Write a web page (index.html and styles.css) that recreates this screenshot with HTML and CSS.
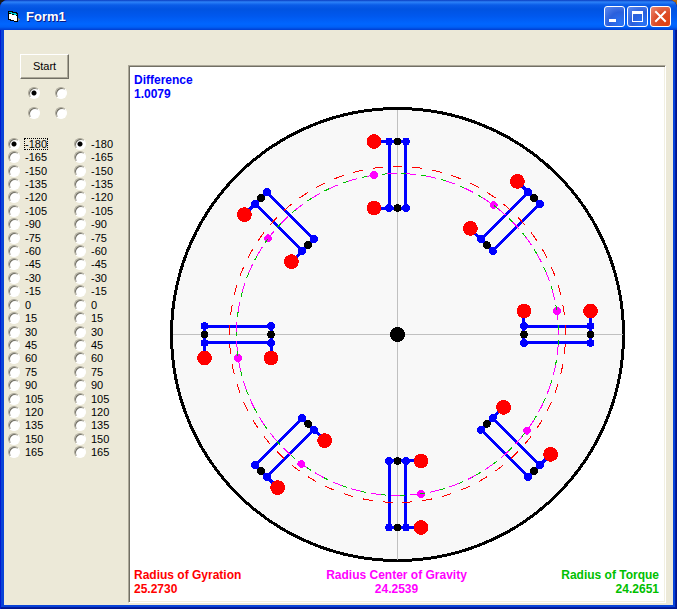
FILE: index.html
```html
<!DOCTYPE html>
<html lang="en">
<head>
  <meta charset="UTF-8" />
  <meta name="viewport" content="width=device-width, initial-scale=1.0" />
  <title>Form1</title>
  <link rel="stylesheet" href="styles.css">
</head>
<body>
  <div class="window">
    <header class="titlebar">
      <svg class="app-icon" width="14" height="12" viewBox="0 0 14 12" shape-rendering="crispEdges">
        <path d="M1 0h5v1h4v1h1v9h-4v-1h-4v-1h-2z" fill="#000" />
        <path d="M2 1h3v1h4v1h1v1h-3v-1h-3v-1h-2z" fill="#00d0d0" />
        <path d="M2 3h3v1h4v1h1v5h-3v-1h-3v-1h-2z" fill="#fff" />
        <path d="M11 7h1v1h1v1h-1v1h-1z" fill="#808080" />
      </svg>
      <h1>Form1</h1>
      <div class="window-buttons">
        <button aria-label="Minimize"><svg width="19" height="19" viewBox="0 0 19 19"><path d="M4 12h7v3h-7z" fill="#fff" /></svg></button>
        <button aria-label="Maximize"><svg width="19" height="19" viewBox="0 0 19 19"><path d="M4 4h11v11h-11z M5 7v7h9v-7z" fill="#fff" fill-rule="evenodd" /></svg></button>
        <button class="close" aria-label="Close"><svg width="19" height="19" viewBox="0 0 19 19"><path d="M5 5l9 9M14 5l-9 9" stroke="#fff" stroke-width="2" stroke-linecap="square" /></svg></button>
      </div>
    </header>

    <main class="client">
      <div class="sidebar">
        <button class="start">Start</button>
        <div class="modes">
          <input type="radio" name="mode" aria-label="Mode 1" checked />
          <input type="radio" name="mode" aria-label="Mode 2" />
          <input type="radio" name="mode" aria-label="Mode 3" />
          <input type="radio" name="mode" aria-label="Mode 4" />
        </div>
        <div class="angles">
          <div class="angle-list" id="angleA"></div>
          <div class="angle-list" id="angleB"></div>
        </div>
      </div>

      <div class="picture">
        <svg class="wheel" viewBox="-267.5 -267.5 534 534" shape-rendering="crispEdges">
          <defs>
            <g id="arm">
              <path d="M-8 -193V-126M8 -193V-126M-24 -193H8M-24 -126H8" stroke="#00f" stroke-width="3" fill="none" />
              <g fill="#00f">
                <circle cx="-8.5" cy="-193" r="3.8" />
                <circle cx="8.5" cy="-193" r="3.8" />
                <circle cx="-8.5" cy="-126.5" r="3.8" />
                <circle cx="8.5" cy="-126.5" r="3.8" />
              </g>
              <circle cx="0" cy="-193" r="3.8" />
              <circle cx="0" cy="-126.5" r="3.8" />
              <circle cx="-23.5" cy="-193" r="7.4" fill="#f00" />
              <circle cx="-23.5" cy="-126.5" r="7.4" fill="#f00" />
            </g>
          </defs>
          <circle r="226" fill="#f8f8f8" stroke="#000" stroke-width="3" />
          <path d="M-225 0H225M0 -225V225" stroke="#c0c0c0" />
          <use href="#arm" />
          <use href="#arm" transform="rotate(45)" />
          <use href="#arm" transform="rotate(90)" />
          <use href="#arm" transform="rotate(135)" />
          <use href="#arm" transform="rotate(180)" />
          <use href="#arm" transform="rotate(225)" />
          <use href="#arm" transform="rotate(270)" />
          <use href="#arm" transform="rotate(315)" />
          <g fill="#f0f">
            <circle cx="-23.5" cy="-159.5" r="3.8" />
            <circle cx="-23.5" cy="-159.5" r="3.8" transform="rotate(45)" />
            <circle cx="-23.5" cy="-159.5" r="3.8" transform="rotate(90)" />
            <circle cx="-23.5" cy="-159.5" r="3.8" transform="rotate(135)" />
            <circle cx="-23.5" cy="-159.5" r="3.8" transform="rotate(180)" />
            <circle cx="-23.5" cy="-159.5" r="3.8" transform="rotate(225)" />
            <circle cx="-23.5" cy="-159.5" r="3.8" transform="rotate(270)" />
            <circle cx="-23.5" cy="-159.5" r="3.8" transform="rotate(315)" />
          </g>
          <!-- gyration, torque and gravity radii, drawn counterclockwise from the right -->
          <g fill="none" stroke-dasharray="10 10">
            <path d="M168 0A168 168 0 0 0 -168 0A168 168 0 0 0 168 0" pathLength="1060" stroke="#f00" />
            <path d="M161 0A161 161 0 0 0 -161 0A161 161 0 0 0 161 0" pathLength="1016" stroke="#00c000" />
            <path d="M161 0A161 161 0 0 0 -161 0A161 161 0 0 0 161 0" pathLength="1016" stroke="#f0f" stroke-dashoffset="5" />
          </g>
          <circle r="7.5" />
        </svg>
        <div class="readouts">
          <p class="difference">Difference<br />1.0079</p>
          <p class="gyration">Radius of Gyration<br />25.2730</p>
          <p class="gravity">Radius Center of Gravity<br />24.2539</p>
          <p class="torque">Radius of Torque<br />24.2651</p>
        </div>
      </div>
    </main>
  </div>

  <script>
    function buildAngles(id) {
      const list = document.getElementById(id);
      for (let angle = -180; angle < 180; angle += 15) {
        const label = document.createElement("label");
        const radio = document.createElement("input");
        const text = document.createElement("span");
        radio.type = "radio";
        radio.name = id;
        radio.value = angle;
        radio.checked = angle === -180;
        text.textContent = angle;
        label.append(radio, text);
        list.append(label);
      }
    }

    buildAngles("angleA");
    buildAngles("angleB");
    document.querySelector("#angleA span").className = "focused";
  </script>
</body>
</html>
```
FILE: styles.css
```css
* {
  box-sizing: border-box;
}
body {
  margin: 0;
  background: linear-gradient(to right, #1a1a1a 50%, #b06a10 50%);
  font-family: "Liberation Sans", Arial, sans-serif;
  font-size: 11px;
  color: #000;
}
.window {
  display: flex;
  flex-direction: column;
  height: 100vh;
  min-height: 480px;
  padding: 0 4px 4px;
  border-radius: 8px 8px 0 0;
  background: #0843d8;
  box-shadow: inset 1px 0 #0019cf, inset -1px -1px #00138c, inset -2px -2px #001ea0;
}
.titlebar {
  display: flex;
  align-items: center;
  height: 30px;
  margin: 0 -4px;
  padding: 3px 6px 0 7px;
  border-radius: 8px 8px 0 0;
  background: linear-gradient(#0a3cc0 0, #2c82f8 2px, #0a5ce8 5px, #0053e1 9px, #0058ee 16px, #0066ff 24px, #0060f6 27px, #003dd0 30px);
}
.app-icon {
  margin-right: 5px;
}
.titlebar h1 {
  flex: 1;
  margin: 0;
  font-size: 13px;
  font-weight: 700;
  color: #fff;
  text-shadow: 1px 1px #0a1883;
}
.window-buttons {
  display: flex;
  gap: 2px;
}
.window-buttons button {
  width: 21px;
  height: 21px;
  padding: 0;
  border: 1px solid #fff;
  border-radius: 3px;
  background: radial-gradient(circle at 80% 85%, #2a74f5, #2a5fdc 50%, #5f8bef);
}
.window-buttons .close {
  background: radial-gradient(circle at 80% 85%, #e04010, #dc4c28 50%, #ec8b74);
}
.window-buttons svg {
  display: block;
}
.client {
  display: flex;
  flex: 1;
  min-height: 0;
  padding: 0 7px 2px 0;
  background: #ece9d8;
}
.sidebar {
  flex: 0 0 124px;
  min-width: 0;
  padding: 24px 0 0 4px;
}
.start {
  display: block;
  width: 49px;
  height: 25px;
  margin-left: 12px;
  padding: 0 0 2px;
  border: 1px solid;
  border-color: #fff #716f64 #716f64 #fff;
  box-shadow: inset -1px -1px #aca899;
  background: #ece9d8;
  font: inherit;
}
.modes {
  display: grid;
  grid-template-columns: 27px 27px;
  grid-auto-rows: 20px;
  align-items: center;
  margin: 4px 0 14px 20px;
}
input[type="radio"] {
  appearance: none;
  width: 12px;
  height: 12px;
  margin: 0;
  border: 1px solid;
  border-color: #aca899 #fff #fff #aca899;
  border-radius: 50%;
  background: #fff;
  box-shadow: inset 1px 1px #716f64;
}
input[type="radio"]:checked {
  background: radial-gradient(circle, #000 2px, #fff 3px);
}
.angles {
  display: grid;
  grid-template-columns: 66px 1fr;
}
.angle-list {
  display: grid;
  grid-template-rows: repeat(24, 1fr);
  height: 322px;
}
.angle-list label {
  display: flex;
  align-items: center;
  gap: 4px;
}
.angle-list span {
  padding: 0 1px;
  line-height: 12px;
}
.angle-list .focused {
  outline: 1px dotted #000;
  outline-offset: -1px;
}
.picture {
  display: grid;
  flex: 1;
  min-width: 0;
  margin-top: 35px;
  border: 1px solid;
  border-color: #aca899 #fff #fff #aca899;
  box-shadow: inset 1px 1px #716f64, inset -1px -1px #f1efe2;
  padding: 1px;
  background: #fff content-box;
}
.wheel {
  grid-area: 1 / 1;
  width: 100%;
  height: 100%;
  min-height: 0;
}
.readouts {
  grid-area: 1 / 1;
  display: grid;
  grid-template-columns: 1fr auto 1fr;
  grid-template-rows: 1fr auto;
  padding: 6px 5px 5px 4px;
  font-size: 12px;
  font-weight: 700;
  line-height: 14px;
}
.readouts p {
  margin: 0;
}
.difference {
  grid-column: 1 / 4;
  color: #00f;
}
.gyration {
  color: #f00;
}
.gravity {
  text-align: center;
  color: #f0f;
}
.torque {
  text-align: right;
  color: #00c000;
}
```
